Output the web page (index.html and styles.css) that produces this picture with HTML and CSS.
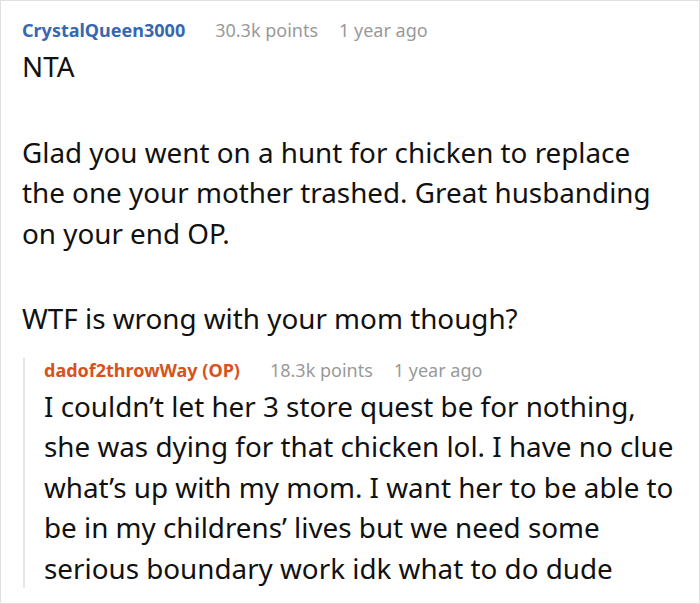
FILE: index.html
```html
<!DOCTYPE html>
<html>
<head>
<meta charset="utf-8">
<link rel="stylesheet" href="styles.css">
</head>
<body>
<div class="page">
  <div class="comment">
    <div class="meta">
      <span class="author">CrystalQueen3000</span>
      <span class="info">30.3k points</span>
      <span class="info">1 year ago</span>
    </div>
    <div class="body">
      <p class="nta">NTA</p>
      <p>Glad you went on a hunt for chicken to replace the one your mother trashed. Great husbanding on your end OP.</p>
      <p>WTF is wrong with your mom though?</p>
    </div>
    <div class="reply">
      <div class="meta">
        <span class="author op">dadof2throwWay (OP)</span>
        <span class="info">18.3k points</span>
        <span class="info">1 year ago</span>
      </div>
      <div class="body">
        <p>I couldn’t let her 3 store quest be for nothing, she was dying for that chicken lol. I have no clue what’s up with my mom. I want her to be able to be in my childrens’ lives but we need some serious boundary work idk what to do dude</p>
      </div>
    </div>
  </div>
</div>
</body>
</html>
```
FILE: styles.css
```css
html, body {
  margin: 0;
  padding: 0;
  background: #fff;
}
.page {
  width: 700px;
  height: 604px;
  box-sizing: border-box;
  border: 1px solid #e0e0e0;
  padding: 17px 25px 0 21px;
  overflow: hidden;
  font-family: "Noto Sans", "Open Sans", sans-serif;
  color: #111;
}
.meta {
  display: flex;
  align-items: baseline;
  font-size: 18px;
  line-height: 24px;
  white-space: nowrap;
}
.author {
  font-weight: 700;
  color: #3767b1;
  margin-right: 30px;
}
.author.op {
  color: #d6531c;
}
.info {
  color: #999;
  margin-right: 21px;
}
.body p {
  margin: 0 0 45px 0;
  font-size: 27.8px;
  line-height: 40.5px;
}
.body p.nta {
  margin-top: 4px;
}
.body p:last-child {
  margin-bottom: 0;
}
.reply {
  margin-top: 30px;
  margin-left: 1px;
  border-left: 2px solid #e6e6e6;
  padding-left: 19px;
}
.reply .meta {
  margin-top: -11px;
}
.reply .body {
  margin-top: 4px;
}
```
